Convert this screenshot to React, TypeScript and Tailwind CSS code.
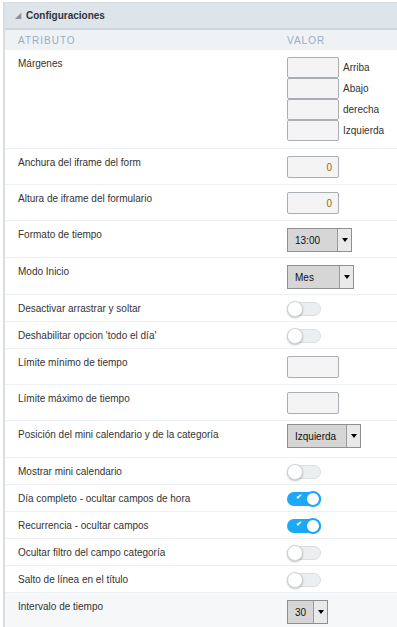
import React from 'react';

type Row =
  | { label: string; kind: 'margins' }
  | { label: string; kind: 'number'; value: string }
  | { label: string; kind: 'empty' }
  | { label: string; kind: 'select'; value: string; width: string }
  | { label: string; kind: 'toggle'; on: boolean };

const rows: Row[] = [
  { label: 'Márgenes', kind: 'margins' },
  { label: 'Anchura del iframe del form', kind: 'number', value: '0' },
  { label: 'Altura de iframe del formulario', kind: 'number', value: '0' },
  { label: 'Formato de tiempo', kind: 'select', value: '13:00', width: 'w-[65px]' },
  { label: 'Modo Inicio', kind: 'select', value: 'Mes', width: 'w-[67px]' },
  { label: 'Desactivar arrastrar y soltar', kind: 'toggle', on: false },
  { label: "Deshabilitar opcion 'todo el día'", kind: 'toggle', on: false },
  { label: 'Límite mínimo de tiempo', kind: 'empty' },
  { label: 'Límite máximo de tiempo', kind: 'empty' },
  { label: 'Posición del mini calendario y de la categoría', kind: 'select', value: 'Izquierda', width: 'w-[74px]' },
  { label: 'Mostrar mini calendario', kind: 'toggle', on: false },
  { label: 'Día completo - ocultar campos de hora', kind: 'toggle', on: true },
  { label: 'Recurrencia - ocultar campos', kind: 'toggle', on: true },
  { label: 'Ocultar filtro del campo categoría', kind: 'toggle', on: false },
  { label: 'Salto de línea en el título', kind: 'toggle', on: false },
  { label: 'Intervalo de tiempo', kind: 'select', value: '30', width: 'w-[41px]' },
];

const Box = ({ value }: { value?: string }) => (
  <div className="w-[52px] h-[22px] bg-[#f4f4f4] border border-[#a9aeb5] rounded-[2px] flex items-center justify-end pr-[6px] text-[10px] text-[#a0620a]">
    {value}
  </div>
);

const Select = ({ value, width }: { value: string; width: string }) => (
  <div className={`${width} h-[24px] bg-[#d6d6d6] border border-[#8f8f8f] flex items-stretch`}>
    <span className="flex-1 flex items-center pl-[7px] text-[10px] text-[#111]">{value}</span>
    <span className="w-[14px] border-l border-[#9a9a9a] bg-[#e9e9e9] flex items-center justify-center">
      <span className="w-0 h-0 border-l-[3px] border-r-[3px] border-t-[4px] border-l-transparent border-r-transparent border-t-black" />
    </span>
  </div>
);

const Toggle = ({ on }: { on: boolean }) =>
  on ? (
    <div className="relative w-[34px] h-[14px] rounded-full bg-[#1aa8f7]">
      <span className="absolute left-[9px] top-[0px] text-[7px] leading-[10px] text-white font-bold">✔</span>
      <span className="absolute right-0 top-[-1px] w-[16px] h-[16px] rounded-full bg-white border-[2px] border-[#1aa8f7]" />
    </div>
  ) : (
    <div className="relative w-[34px] h-[14px] rounded-full bg-[#eceff2] border border-[#d9dee3]">
      <span className="absolute left-[-1px] top-[-2px] w-[16px] h-[16px] rounded-full bg-white border border-[#cfd4d9] shadow-[0_1px_2px_rgba(0,0,0,0.25)]" />
    </div>
  );

export default function App() {
  return (
    <div className="w-[397px] h-[627px] overflow-hidden bg-white font-['Liberation_Sans',Arial,sans-serif]">
      <div className="ml-[3px] mt-[2px] border-l-[2px] border-t border-[#d8dde2]">
        <div className="h-[27px] bg-[#dde4ea] border-b-[2px] border-[#cbd6de] flex items-center pl-[10px] gap-[5px]">
          <span className="text-[8px] text-[#8a9198] leading-none mt-[1px]">◢</span>
          <span className="text-[10px] font-bold text-[#2b3440]">Configuraciones</span>
        </div>
        <div className="h-[20px] bg-[#eef2f5] flex items-center text-[10px] tracking-[0.1em] text-[#9aaebf]">
          <span className="pl-[13px] w-[282px]">ATRIBUTO</span>
          <span>VALOR</span>
        </div>
        {rows.map((row, i) => {
          const last = i === rows.length - 1;
          let value: React.ReactNode = null;
          let rowCls = 'min-h-[27px] pt-[7px] pb-[6px]';
          if (row.kind === 'margins') {
            rowCls = 'h-[99px] pt-[7px]';
            value = (
              <div className="flex flex-col">
                {['Arriba', 'Abajo', 'derecha', 'Izquierda'].map((s) => (
                  <div key={s} className="flex items-center gap-[4px]">
                    <div className="w-[52px] h-[21px] bg-[#f4f4f4] border border-[#a9aeb5] rounded-[2px]" />
                    <span className="text-[10px] text-[#333]">{s}</span>
                  </div>
                ))}
              </div>
            );
          } else if (row.kind === 'number') {
            rowCls = 'h-[36px] pt-[7px]';
            value = <Box value={row.value} />;
          } else if (row.kind === 'empty') {
            rowCls = 'h-[36px] pt-[7px]';
            value = <Box />;
          } else if (row.kind === 'select') {
            rowCls = row.value === 'Izquierda' ? 'h-[37px] pt-[3px]' : 'h-[37px] pt-[7px]';
            value = <Select value={row.value} width={row.width} />;
          } else if (row.kind === 'toggle') {
            rowCls = 'h-[27px] pt-[7px]';
            value = <Toggle on={row.on} />;
          }
          return (
            <div
              key={row.label}
              className={`flex ${rowCls} ${last ? 'bg-[#f6f7f9] h-[40px]' : 'border-b border-[#eceff3]'}`}
            >
              <div className={`w-[282px] pl-[13px] text-[10px] text-[#333] leading-[12px] ${row.kind === 'select' && row.value === 'Izquierda' ? 'pt-[5px]' : 'pt-[1px]'}`}>
                {row.label}
              </div>
              <div>{value}</div>
            </div>
          );
        })}
      </div>
    </div>
  );
}
